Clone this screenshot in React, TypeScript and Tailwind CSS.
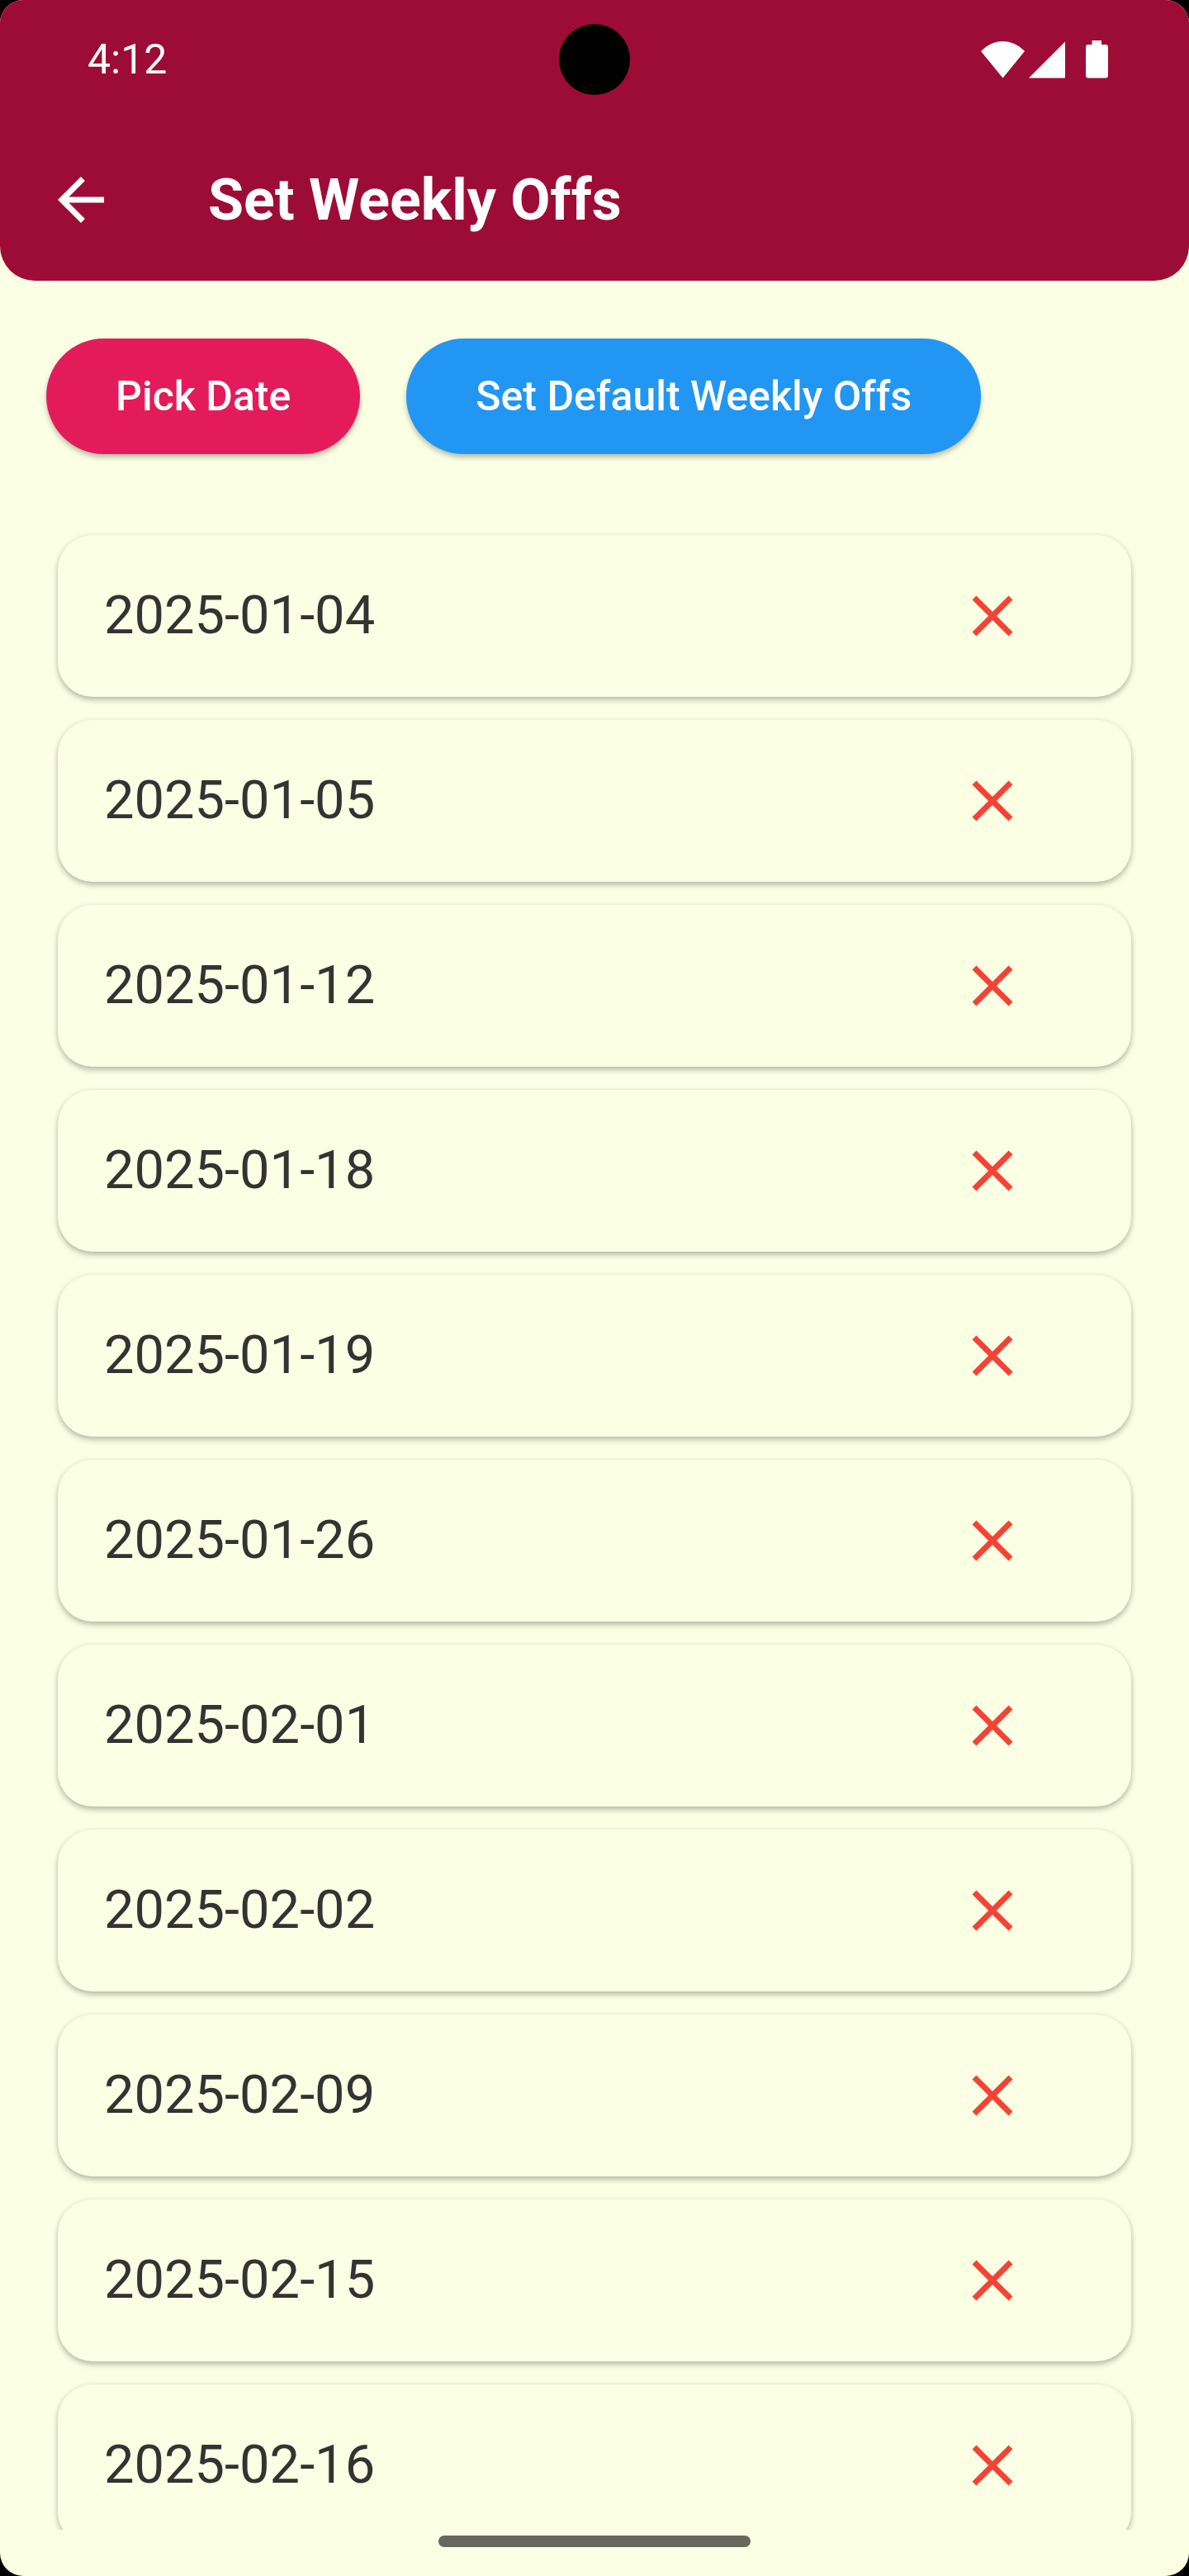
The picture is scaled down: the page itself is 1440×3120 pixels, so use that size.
import { useState } from "react";
import { MdArrowBack, MdClose } from "react-icons/md";

const INITIAL_DATES = [
  "2025-01-04",
  "2025-01-05",
  "2025-01-12",
  "2025-01-18",
  "2025-01-19",
  "2025-01-26",
  "2025-02-01",
  "2025-02-02",
  "2025-02-09",
  "2025-02-15",
  "2025-02-16",
];

function StatusBar() {
  return (
    <div className="grid h-36 grid-cols-3 items-center px-[98px] text-white">
      <span className="pl-2 text-[50px] leading-normal">4:12</span>
      <span className="size-[86px] justify-self-center rounded-full bg-black" />
      <div className="flex items-center justify-end">
        <svg viewBox="0 0 154 46" className="h-[46px] w-[154px] fill-current" aria-hidden="true">
          <path d="M0 13C8 5 17 1 26.500 1S45 5 53 13L26.500 45.500Z" />
          <path d="M102 1.500V45.500H58Z" />
          <path d="M134.500 0h11.500v5h5a3 3 0 0 1 3 3v34.500a3 3 0 0 1-3 3h-21a3 3 0 0 1-3-3V8a3 3 0 0 1 3-3h4.500Z" />
        </svg>
      </div>
    </div>
  );
}

function AppBar() {
  return (
    <div className="flex h-[196px] items-center gap-28 pl-14 text-white">
      <button type="button" aria-label="Back" className="shrink-0">
        <MdArrowBack className="size-[84px]" />
      </button>
      <h1 className="text-[70px] leading-normal font-bold">Set Weekly Offs</h1>
    </div>
  );
}

function DateCard({ date, onRemove }: { date: string; onRemove: () => void }) {
  return (
    <li className="flex h-[196px] shrink-0 items-center justify-between rounded-[42px] bg-[#fbffe3] pr-[126px] pl-14 shadow-[0_4px_7px_rgba(0,0,0,0.24),0_0_6px_rgba(0,0,0,0.08)]">
      <time dateTime={date} className="text-[65px] leading-normal text-[#333333]">
        {date}
      </time>
      <button type="button" aria-label={`Remove ${date}`} onClick={onRemove} className="text-[#f44336]">
        <MdClose className="size-[84px]" />
      </button>
    </li>
  );
}

export default function App() {
  const [dates, setDates] = useState(INITIAL_DATES);

  return (
    <div className="h-screen bg-black font-[Roboto,sans-serif]">
      <div className="flex h-full flex-col overflow-hidden rounded-[28px] bg-[#fbffe3]">
        <header className="shrink-0 rounded-b-[42px] bg-[#9d0c36]">
          <StatusBar />
          <AppBar />
        </header>
        <main className="flex min-h-0 flex-1 flex-col">
          <div className="flex shrink-0 gap-14 px-14 py-[70px] text-[50px] leading-normal font-medium text-white">
            <button
              type="button"
              className="h-[140px] rounded-full bg-[#e41b5b] px-[84px] whitespace-nowrap shadow-[0_4px_6px_rgba(0,0,0,0.26)]"
            >
              Pick Date
            </button>
            <button
              type="button"
              className="h-[140px] rounded-full bg-[#2196f3] px-[84px] whitespace-nowrap shadow-[0_4px_6px_rgba(0,0,0,0.26)]"
            >
              Set Default Weekly Offs
            </button>
          </div>
          <ul className="flex min-h-0 flex-1 flex-col gap-7 overflow-y-auto px-[70px] py-7 [scrollbar-width:none]">
            {dates.map((date) => (
              <DateCard
                key={date}
                date={date}
                onRemove={() => setDates(dates.filter((other) => other !== date))}
              />
            ))}
          </ul>
        </main>
        <footer className="flex h-14 shrink-0 justify-center pt-[7px]">
          <span className="h-3.5 w-[378px] rounded-full bg-[#67675d]" />
        </footer>
      </div>
    </div>
  );
}
